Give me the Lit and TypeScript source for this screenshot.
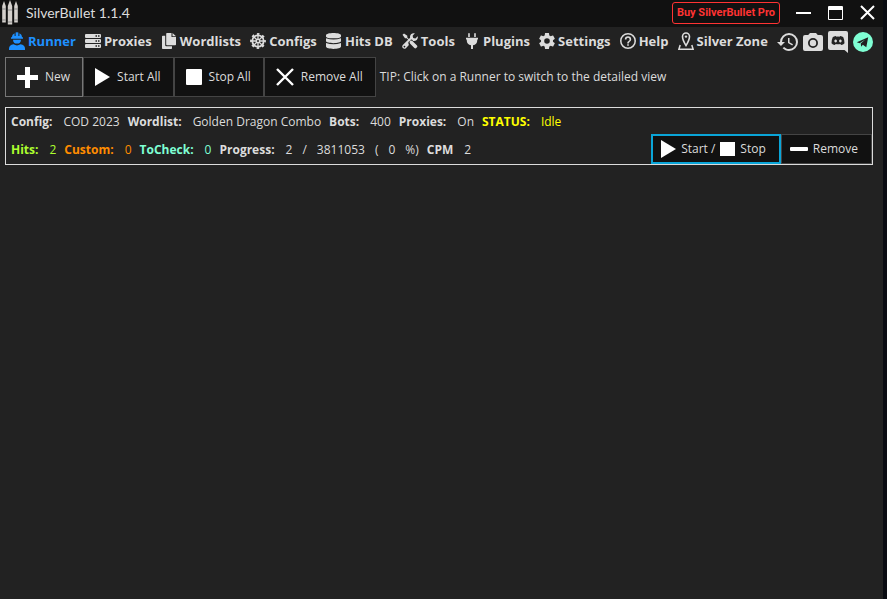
import { LitElement, html, css, svg } from "lit";
import type { SVGTemplateResult } from "lit";
import { customElement, property } from "lit/decorators.js";

interface Glyph {
  box: string;
  art: SVGTemplateResult;
}

const glyphs: Record<string, Glyph> = {
  bullets: {
    box: "0 0 18 26",
    art: svg`<g fill="#d4d0cc"><path d="M3 1L4.800 6V22.500H1.200V6Z M9 0L11.200 6V24.500H6.800V6Z M15 1L16.800 6V22.500H13.200V6Z"/></g><path d="M1 9H5 M7 10H11 M13 9H17 M1 20H5 M7 22H11 M13 20H17" stroke="#888" stroke-width="1"/>`,
  },
  runner: {
    box: "0 0 16 18",
    art: svg`<path d="M3 5.200C3 3.500 4 2 5.600 1.300V4H6.600V.500Q8 0 9.400 .500V4H10.400V1.300C12 2 13 3.500 13 5.200H14V6.700H2V5.200Z M4 7.700H12Q11.800 11.600 8 11.600Q4.200 11.600 4 7.700Z M0 18V16.500Q0 13 4.500 12.300Q8 14.500 11.500 12.300Q16 13 16 16.500V18Z"/>`,
  },
  server: {
    box: "0 0 16 14",
    art: svg`<path fill-rule="evenodd" d="M1 0H15Q16 0 16 1V3Q16 4 15 4H1Q0 4 0 3V1Q0 0 1 0ZM10.500 1.300V2.700H12V1.300ZM13 1.300V2.700H14.500V1.300Z M1 5H15Q16 5 16 6V8Q16 9 15 9H1Q0 9 0 8V6Q0 5 1 5ZM10.500 6.300V7.700H12V6.300ZM13 6.300V7.700H14.500V6.300Z M1 10H15Q16 10 16 11V13Q16 14 15 14H1Q0 14 0 13V11Q0 10 1 10ZM10.500 11.300V12.700H12V11.300ZM13 11.300V12.700H14.500V11.300Z"/>`,
  },
  copy: {
    box: "0 0 14 16",
    art: svg`<path d="M5 0H9.500V4H14V11.500Q14 12.300 13.200 12.300H5Q4.200 12.300 4.200 11.500V.800Q4.200 0 5 0Z M10.500 0L14 3.200H10.500Z M.800 2.800H3.200V12.300Q3.200 13.300 4.200 13.300H10V15.200Q10 16 9.200 16H.800Q0 16 0 15.200V3.600Q0 2.800 .800 2.800Z"/>`,
  },
  wheel: {
    box: "0 0 16 16",
    art: svg`<g fill="none" stroke="currentColor"><circle cx="8" cy="8" r="5.700" stroke-width="1.800"/><path d="M8 1V15M1 8H15M3 3L13 13M13 3L3 13" stroke-width="1.300"/><circle cx="8" cy="8" r="7.100" stroke-width="1.600" stroke-dasharray="2.600 2.976" stroke-dashoffset="1.300"/></g><circle cx="8" cy="8" r="2.400"/><circle cx="8" cy="8" r="1" fill="#222"/>`,
  },
  database: {
    box: "0 0 15 16",
    art: svg`<path d="M0 2.300C0 -.700 15 -.700 15 2.300V3.400C15 6 0 6 0 3.400Z M0 5.200Q7.500 7.700 15 5.200V8.100C15 10.900 0 10.900 0 8.100Z M0 10.100Q7.500 12.600 15 10.100V13.500C15 16.700 0 16.700 0 13.500Z"/>`,
  },
  tools: {
    box: "0 0 16 16",
    art: svg`<path d="M.500 1.800L2 .400L5.300 2.800V4.600L8.300 7.500Q9.500 7.100 10.700 8.200L15 12.500Q15.800 13.400 15 14.300L14.200 15Q13.300 15.800 12.400 15L8.200 10.700Q7.200 9.600 7.700 8.300L4.700 5.300H3Z"/><path fill-rule="evenodd" d="M15.700 3.200L13.400 5.500L11.200 5L10.600 2.700L12.900 .300Q10.700 -.300 9 1.200Q7.700 2.600 8.100 4.800L.800 12Q-.400 13.600 .800 15.100Q2.300 16.400 3.900 15.200L6.900 12.100Q6.200 10.500 6.400 9.300L7.600 7.600L9.200 6.500Q10 6.300 11.100 7.900Q13.300 8.200 14.800 6.900Q16.300 5.200 15.700 3.200ZM2.500 12.700A.8 .8 0 1 1 2.400 12.700Z"/>`,
  },
  plug: {
    box: "0 0 12 16",
    art: svg`<path d="M2.200 .800Q2.200 0 3 0T3.800 .800V4H2.200Z M8.200 .800Q8.200 0 9 0T9.800 .800V4H8.200Z M0 4.700H12V6.400H11.200V8Q11 11.500 7 12.200V16H5V12.200Q1 11.500 .800 8V6.400H0Z"/>`,
  },
  cog: {
    box: "2 2 20 20",
    art: svg`<path d="M12,15.5A3.5,3.5 0 0,1 8.5,12A3.5,3.5 0 0,1 12,8.5A3.5,3.5 0 0,1 15.5,12A3.5,3.5 0 0,1 12,15.5M19.43,12.97C19.47,12.65 19.5,12.33 19.5,12C19.5,11.67 19.47,11.34 19.43,11L21.54,9.37C21.73,9.22 21.78,8.95 21.66,8.73L19.66,5.27C19.54,5.05 19.27,4.96 19.05,5.05L16.56,6.05C16.04,5.66 15.5,5.32 14.87,5.07L14.5,2.42C14.46,2.18 14.25,2 14,2H10C9.75,2 9.54,2.18 9.5,2.42L9.13,5.07C8.5,5.32 7.96,5.66 7.44,6.05L4.95,5.05C4.73,4.96 4.46,5.05 4.34,5.27L2.34,8.73C2.21,8.95 2.27,9.22 2.46,9.37L4.57,11C4.53,11.34 4.5,11.67 4.5,12C4.5,12.33 4.53,12.65 4.57,12.97L2.46,14.63C2.27,14.78 2.21,15.05 2.34,15.27L4.34,18.73C4.46,18.95 4.73,19.03 4.95,18.95L7.44,17.94C7.96,18.34 8.5,18.68 9.13,18.93L9.5,21.58C9.54,21.82 9.75,22 10,22H14C14.25,22 14.46,21.82 14.5,21.58L14.87,18.93C15.5,18.67 16.04,18.34 16.56,17.94L19.05,18.95C19.27,19.03 19.54,18.95 19.66,18.73L21.66,15.27C21.78,15.05 21.73,14.78 21.54,14.63L19.43,12.97Z"/>`,
  },
  help: {
    box: "2 2 20 20",
    art: svg`<path d="M11,18H13V16H11V18M12,2A10,10 0 0,0 2,12A10,10 0 0,0 12,22A10,10 0 0,0 22,12A10,10 0 0,0 12,2M12,20C7.59,20 4,16.41 4,12C4,7.59 7.59,4 12,4C16.41,4 20,7.59 20,12C20,16.41 16.41,20 12,20M12,6A4,4 0 0,0 8,10H10A2,2 0 0,1 12,8A2,2 0 0,1 14,10C14,12 11,11.75 11,15H13C13,12.75 16,12.5 16,10A4,4 0 0,0 12,6Z"/>`,
  },
  zone: {
    box: "0 0 16 18",
    art: svg`<path d="M8 13.500Q4.500 8 4.500 4.500A3.500 3.500 0 0 1 11.500 4.500Q11.500 8 8 13.500Z" fill="none" stroke="currentColor" stroke-width="1.600"/><circle cx="8" cy="4.600" r="1.200"/><path d="M2.200 13L.900 17.200H15.100L13.800 13" fill="none" stroke="currentColor" stroke-width="1.500"/>`,
  },
  history: {
    box: "1 2 21 20",
    art: svg`<path d="M13.5,8H12V13L16.28,15.54L17,14.33L13.5,12.25V8M13,3A9,9 0 0,0 4,12H1L4.96,16.03L9,12H6A7,7 0 0,1 13,5A7,7 0 0,1 20,12A7,7 0 0,1 13,19C11.07,19 9.32,18.21 8.06,16.94L6.64,18.36C8.27,20 10.5,21 13,21A9,9 0 0,0 22,12A9,9 0 0,0 13,3"/>`,
  },
  camera: {
    box: "0 0 20 18",
    art: svg`<path fill-rule="evenodd" d="M7 0H13L14.800 2H18Q20 2 20 4V16Q20 18 18 18H2Q0 18 0 16V4Q0 2 2 2H5.200ZM10 5A5 5 0 1 0 10 15A5 5 0 1 0 10 5ZM10 6.800A3.200 3.200 0 1 1 10 13.200A3.200 3.200 0 1 1 10 6.800Z"/>`,
  },
  discord: {
    box: "0 0 20 22",
    art: svg`<path fill-rule="evenodd" d="M2 0H18Q20 0 20 2V22L16.500 19H2Q0 19 0 17V2Q0 0 2 0ZM8 5Q5.500 5.200 4.700 6.300Q3.500 9 3.500 12.300Q4.700 13.900 6.900 13.900L7.700 12.900Q10 13.500 12.300 12.900L13.100 13.900Q15.300 13.900 16.500 12.300Q16.500 9 15.300 6.300Q14.500 5.200 12 5L11.600 5.700Q10 5.400 8.400 5.700ZM7.700 8.600A1.300 1.400 0 1 1 7.600 8.600ZM12.400 8.600A1.300 1.400 0 1 1 12.300 8.600Z"/>`,
  },
  telegram: {
    box: "0 0 20 20",
    art: svg`<circle cx="10" cy="10" r="10" fill="#7fffd4"/><path d="M3.800 10.200L15.200 5.200L13.300 15.300L9.800 12.800L8.200 14.700L7.700 11.600L12.300 7.600L6.600 11.200Z" fill="#222"/>`,
  },
  plus: { box: "0 0 21 21", art: svg`<path d="M8 0H13V8H21V13H13V21H8V13H0V8H8Z"/>` },
  play: { box: "0 0 15 18", art: svg`<path d="M0 0L15 9L0 18Z"/>` },
  stop: { box: "0 0 16 16", art: svg`<rect width="16" height="16" rx="1"/>` },
  square: { box: "0 0 15 14", art: svg`<rect width="15" height="14"/>` },
  cross: {
    box: "0 0 18 18",
    art: svg`<path d="M1 1L17 17M17 1L1 17" stroke="currentColor" stroke-width="2.400"/>`,
  },
  dash: { box: "0 0 18 4", art: svg`<rect width="18" height="4" rx="1"/>` },
  minimize: { box: "0 0 15 2", art: svg`<rect width="15" height="2"/>` },
  maximize: {
    box: "0 0 15 14",
    art: svg`<path fill-rule="evenodd" d="M1 0H14Q15 0 15 1V13Q15 14 14 14H1Q0 14 0 13V1Q0 0 1 0ZM1 4V13H14V4Z"/>`,
  },
  close: {
    box: "0 0 15 15",
    art: svg`<path d="M1 1L14 14M14 1L1 14" stroke="currentColor" stroke-width="2"/>`,
  },
};

@customElement("app-icon")
export class AppIcon extends LitElement {
  @property() name = "";

  static styles = css`
    :host { display: flex; flex: none; justify-content: center; }
    .glyph { display: block; fill: currentColor; }
  `;

  render() {
    const { box, art } = glyphs[this.name];
    const [, , width, height] = box.split(" ");
    const scale = ["cog", "help"].includes(this.name) ? 16 / 20 : 1;
    return html`<svg class="glyph" viewBox=${box} width=${+width * scale} height=${+height * scale} aria-hidden="true">${art}</svg>`;
  }
}

const tabs = [
  ["runner", "Runner"],
  ["server", "Proxies"],
  ["copy", "Wordlists"],
  ["wheel", "Configs"],
  ["database", "Hits DB"],
  ["tools", "Tools"],
  ["plug", "Plugins"],
  ["cog", "Settings"],
  ["help", "Help"],
  ["zone", "Silver Zone"],
];

const shortcuts = [
  ["history", "History"],
  ["camera", "Screenshot"],
  ["discord", "Discord"],
  ["telegram", "Telegram"],
];

@customElement("app-root")
export class AppRoot extends LitElement {
  static styles = css`
    :host {
      display: block;
      min-height: 100vh;
      box-sizing: border-box;
      border-right: 4px solid #0a0c12;
      background: #222;
      color: #dcdcdc;
      font: 12px/16px "Open Sans", "Noto Sans", sans-serif;
    }
    * { box-sizing: border-box; }
    button {
      display: flex;
      align-items: center;
      margin: 0;
      padding: 0;
      border: 0;
      background: none;
      color: inherit;
      font: inherit;
      white-space: nowrap;
    }
    a { color: inherit; text-decoration: none; white-space: nowrap; }
    .titlebar { display: flex; align-items: center; height: 27px; padding: 0 8px 2px 1px; background: #111; }
    .title { flex: 1; margin: 0 0 0 7px; font: 14px/20px Lato, sans-serif; }
    .buy {
      height: 22px;
      padding: 0 4px;
      border: 1px solid #f33;
      border-radius: 3px;
      color: #f33;
      font: bold 11px/16px Roboto, sans-serif;
    }
    .window { display: flex; gap: 17px; margin-left: 16px; color: #fff; }
    .nav { display: flex; align-items: center; justify-content: space-between; height: 30px; padding: 0 10px 0 9px; }
    .tab { display: flex; align-items: center; gap: 3px; padding-bottom: 2px; font: bold 13px/18px "Open Sans", sans-serif; }
    .tab app-icon { width: 16px; }
    .tab.active { color: #1e90ff; }
    .shortcuts { display: flex; align-items: center; gap: 5px; }
    .toolbar { display: flex; align-items: center; padding-left: 5px; }
    .action {
      gap: 7px;
      height: 40px;
      padding: 0 12px 0 11px;
      border: 1px solid #444;
      background: #111;
    }
    .action app-icon, .control app-icon { color: #fff; }
    .action.current { border-color: #777; background: #222; }
    .tip { margin: 0 0 0 4px; }
    .runner { margin: 10px 10px 0 5px; border: 1px solid #dcdcdc; }
    .line { display: flex; align-items: center; height: 28px; padding-left: 5px; }
    .stats { display: flex; flex: 1; gap: 8px; margin: 0; white-space: nowrap; }
    .stat { display: flex; gap: 11px; }
    .stat dt { font-weight: bold; }
    .stat dd { display: flex; gap: 10px; margin: 0; }
    .status { color: #ff0; }
    .hits { color: #adff2f; }
    .custom { color: #ff8c00; }
    .check { color: #7fffd4; }
    .control { gap: 5px; align-self: flex-end; height: 30px; padding: 0 13px 0 8px; border: 1px solid #444; background: #111; }
    .control.focus { border: 2px solid #0aa5d8; }
  `;

  private stat(label: string, values: string[], tone = "") {
    return html`<div class="stat ${tone}"><dt>${label}</dt><dd>${values.map((v) => html`<span>${v}</span>`)}</dd></div>`;
  }

  private action(icon: string, label: string, tone = "") {
    return html`<button class="action ${tone}"><app-icon name=${icon}></app-icon>${label}</button>`;
  }

  render() {
    return html`
      <header class="titlebar">
        <app-icon name="bullets"></app-icon>
        <h1 class="title">SilverBullet 1.1.4</h1>
        <button class="buy">Buy SilverBullet Pro</button>
        <div class="window">
          <button aria-label="Minimize"><app-icon name="minimize"></app-icon></button>
          <button aria-label="Maximize"><app-icon name="maximize"></app-icon></button>
          <button aria-label="Close"><app-icon name="close"></app-icon></button>
        </div>
      </header>
      <nav class="nav">
        ${tabs.map(([icon, label], i) => html`<a class="tab ${i === 0 ? "active" : ""}" href="#"><app-icon name=${icon}></app-icon>${label}</a>`)}
        <div class="shortcuts">
          ${shortcuts.map(([icon, label]) => html`<button aria-label=${label}><app-icon name=${icon}></app-icon></button>`)}
        </div>
      </nav>
      <main>
        <div class="toolbar">
          ${this.action("plus", "New", "current")}
          ${this.action("play", "Start All")}
          ${this.action("stop", "Stop All")}
          ${this.action("cross", "Remove All")}
          <p class="tip">TIP: Click on a Runner to switch to the detailed view</p>
        </div>
        <section class="runner">
          <div class="line">
            <dl class="stats">
              ${this.stat("Config:", ["COD 2023"])}
              ${this.stat("Wordlist:", ["Golden Dragon Combo"])}
              ${this.stat("Bots:", ["400"])}
              ${this.stat("Proxies:", ["On"])}
              ${this.stat("STATUS:", ["Idle"], "status")}
            </dl>
          </div>
          <div class="line">
            <dl class="stats">
              ${this.stat("Hits:", ["2"], "hits")}
              ${this.stat("Custom:", ["0"], "custom")}
              ${this.stat("ToCheck:", ["0"], "check")}
              ${this.stat("Progress:", ["2", "/", "3811053", "(", "0", "%)"])}
              ${this.stat("CPM", ["2"])}
            </dl>
            <button class="control focus"><app-icon name="play"></app-icon>Start / <app-icon name="square"></app-icon>Stop</button>
            <button class="control"><app-icon name="dash"></app-icon>Remove</button>
          </div>
        </section>
      </main>
    `;
  }
}
